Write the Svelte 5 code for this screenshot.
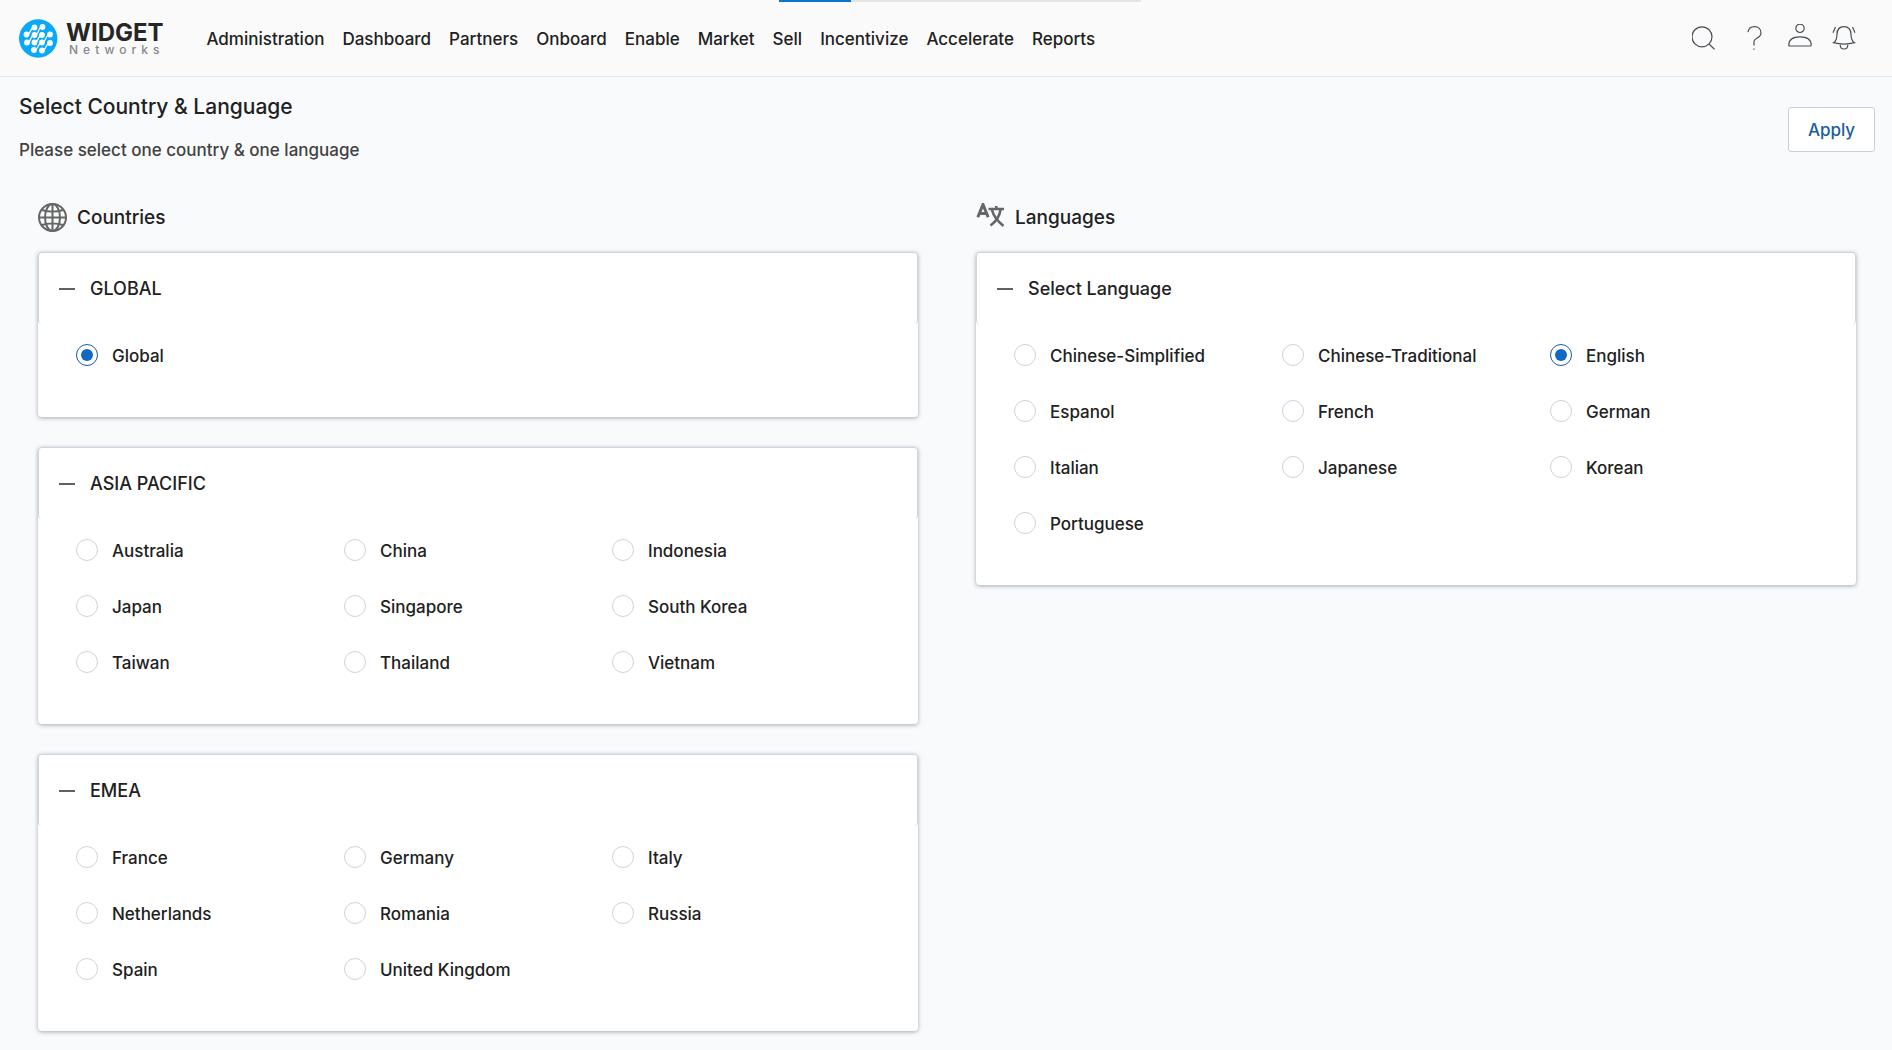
<script lang="ts">
  interface Section {
    title: string;
    options: string[];
  }

  const NAV = [
    "Administration", "Dashboard", "Partners", "Onboard", "Enable",
    "Market", "Sell", "Incentivize", "Accelerate", "Reports"
  ];

  const REGIONS: Section[] = [
    { title: "GLOBAL", options: ["Global"] },
    {
      title: "ASIA PACIFIC",
      options: [
        "Australia", "China", "Indonesia",
        "Japan", "Singapore", "South Korea",
        "Taiwan", "Thailand", "Vietnam"
      ]
    },
    {
      title: "EMEA",
      options: [
        "France", "Germany", "Italy",
        "Netherlands", "Romania", "Russia",
        "Spain", "United Kingdom"
      ]
    }
  ];

  const LANGUAGES: Section[] = [
    {
      title: "Select Language",
      options: [
        "Chinese-Simplified", "Chinese-Traditional", "English",
        "Espanol", "French", "German",
        "Italian", "Japanese", "Korean",
        "Portuguese"
      ]
    }
  ];

  let country = $state("Global");
  let language = $state("English");
  let collapsed: Record<string, boolean> = $state({});
  let progress = $state(20);

  function toggle(title: string) {
    collapsed[title] = !collapsed[title];
  }
</script>

{#snippet card(section: Section, name: string, selected: string, pick: (v: string) => void)}
  <section class="card">
    <button
      class="card-head"
      aria-expanded={!collapsed[section.title]}
      onclick={() => toggle(section.title)}
    >
      <span class="minus"></span>
      {section.title}
    </button>
    {#if !collapsed[section.title]}
      <div class="options">
        {#each section.options as option}
          <label class="option">
            <input
              type="radio"
              {name}
              value={option}
              checked={selected === option}
              onchange={() => pick(option)}
            />
            <span>{option}</span>
          </label>
        {/each}
      </div>
    {/if}
  </section>
{/snippet}

<div class="progress"><div class="progress-bar" style="width: {progress}%"></div></div>

<header class="topbar">
  <a class="logo" href="#home">
    <svg width="39" height="39" viewBox="0 0 39 39">
      <circle cx="19.2" cy="19.5" r="19.2" fill="#0aa8f8" />
      <g stroke="#fff" stroke-width="1.2" fill="none" stroke-linecap="round">
        <path d="M7.500 15.500C13 15 10 9 15.500 8.500" />
        <path d="M8 23.500C13.500 23 10 16.500 15.500 16S18 8.500 23.500 8" />
        <path d="M15.500 23.500C20.500 23 18 16.500 23 16" />
        <path d="M15 31C20.500 30.500 18 24 23 23.500S25.500 16 31 15.500" />
        <path d="M23 31.500C28.500 31 25.500 24.500 31 24" />
      </g>
      <g fill="#fff">
        <circle cx="15.500" cy="8.500" r="2.900" />
        <circle cx="23.500" cy="8" r="2.900" />
        <circle cx="7.500" cy="15.500" r="2.900" />
        <circle cx="15.500" cy="16" r="2.900" />
        <circle cx="23" cy="16" r="2.900" />
        <circle cx="31" cy="15.500" r="2.900" />
        <circle cx="8" cy="23.500" r="2.900" />
        <circle cx="15.500" cy="23.500" r="2.900" />
        <circle cx="23" cy="23.500" r="2.900" />
        <circle cx="31" cy="24" r="2.900" />
        <circle cx="15" cy="31" r="2.900" />
        <circle cx="23" cy="31.500" r="2.900" />
      </g>
    </svg>
    <span class="brand">
      <span class="brand-name">WIDGET</span>
      <span class="brand-sub">Networks</span>
    </span>
  </a>

  <nav class="nav">
    {#each NAV as item}
      <a href="#{item.toLowerCase()}">{item}</a>
    {/each}
  </nav>

  <div class="tools">
    <button class="tool search" aria-label="Search">
      <svg width="24" height="28" viewBox="0 0 24 28">
        <circle cx="10" cy="12.800" r="10" />
        <path d="M17 20l5.500 5.200" />
      </svg>
    </button>
    <button class="tool" aria-label="Help">
      <svg width="24" height="28" viewBox="0 0 24 28">
        <path d="M4 8.200C4.500 4.600 7 2.700 10.500 2.700c4 0 6.500 2.700 6.500 6.300 0 5.500-7 4.500-7 8.500V21.500M10 24.500v1.300" />
      </svg>
    </button>
    <button class="tool" aria-label="Account">
      <svg width="24" height="28" viewBox="0 0 24 28">
        <circle cx="12" cy="4.300" r="4.200" />
        <path d="M.8 21C.8 15.500 5.500 12.800 12 12.800S23.200 15.500 23.200 21c0 .7-.3 1-1 1H1.800c-.7 0-1-.3-1-1z" />
      </svg>
    </button>
    <button class="tool" aria-label="Notifications">
      <svg width="24" height="28" viewBox="0 0 24 28">
        <path d="M12 2.700c-4.500 0-7 3-7 7.500 0 4.500-1 7-3.500 8.500 6 1.600 15 1.600 21 0C20 17.200 19 14.700 19 10.200c0-4.500-2.500-7.500-7-7.500zM8.300 20v1.500c0 2 1.600 3.500 3.700 3.500s3.700-1.500 3.700-3.500V20M3.500 3L1 8.700M20.500 3L23 8.700" />
      </svg>
    </button>
  </div>
</header>

<main class="page">
  <div class="page-head">
    <div>
      <h1>Select Country &amp; Language</h1>
      <p>Please select one country &amp; one language</p>
    </div>
    <button class="apply">Apply</button>
  </div>

  <div class="columns">
    <div class="column">
      <h2>
        <svg width="29" height="29" viewBox="0 0 29 29" fill="none" stroke="#666" stroke-width="2">
          <circle cx="14.500" cy="14.500" r="13.500" />
          <ellipse cx="14.500" cy="14.500" rx="7.500" ry="13.500" />
          <path d="M14.500 1v27M1 14.500h27M4 7c6 2 15 2 21 0M4 22c6-2 15-2 21 0" />
        </svg>
        Countries
      </h2>
      {#each REGIONS as region}
        {@render card(region, "country", country, (v) => (country = v))}
      {/each}
    </div>

    <div class="column">
      <h2>
        <svg width="29" height="29" viewBox="0 0 29 29" fill="none" stroke="#666" stroke-width="3">
          <path d="M1.800 14.300L7 1.500 12.200 14.300M3.500 10.500h7" />
          <path d="M12.500 6h15.500M20.300 3v3M24.500 7c-1 6-5 12-10 15.500M16 7c1.500 6 6 11.500 11.500 16" stroke-width="2.600" />
        </svg>
        Languages
      </h2>
      {#each LANGUAGES as group}
        {@render card(group, "language", language, (v) => (language = v))}
      {/each}
    </div>
  </div>
</main>

<style>
  :global(body) {
    margin: 0;
    background: #f9fafc;
    color: #212121;
    font-family: Inter, "Liberation Sans", sans-serif;
    font-size: 17px;
    font-weight: 450;
  }

  button {
    font-family: inherit;
    cursor: pointer;
  }

  .progress {
    position: absolute;
    top: 0;
    left: 50%;
    width: 362px;
    height: 2px;
    margin-left: -167px;
    background: #e4e4e4;
  }

  .progress-bar {
    height: 100%;
    background: #0b74d1;
  }

  .topbar {
    display: flex;
    align-items: center;
    height: 76px;
    padding: 0 36px 0 19px;
    background: #fafafa;
    border-bottom: 1px solid #dfe7ef;
  }

  .logo {
    display: flex;
    align-items: center;
    gap: 8px;
    color: #262626;
    text-decoration: none;
  }

  .brand {
    display: flex;
    flex-direction: column;
  }

  .brand-name {
    font-size: 24px;
    font-weight: 700;
    line-height: 24px;
  }

  .brand-sub {
    padding-left: 3px;
    color: #888;
    font-size: 12px;
    line-height: 10px;
    letter-spacing: 5px;
  }

  .nav {
    display: flex;
    gap: 18px;
    margin-left: 42px;
    padding-top: 1px;
  }

  .nav a {
    color: #212121;
    text-decoration: none;
  }

  .tools {
    display: flex;
    gap: 20px;
    margin-left: auto;
  }

  .tool {
    display: flex;
    padding: 0;
    border: 0;
    background: none;
  }

  .search {
    margin-right: 8px;
  }

  .tool svg {
    fill: none;
    stroke: #4a5058;
    stroke-width: 1.2;
  }

  .page {
    padding: 16px 17px 16px 19px;
  }

  .page-head {
    display: flex;
    justify-content: space-between;
    align-items: flex-start;
  }

  h1 {
    margin: 0;
    font-size: 21px;
    font-weight: 500;
    line-height: 28px;
  }

  p {
    margin: 16px 0 0;
    color: #424242;
    line-height: 26px;
  }

  .apply {
    width: 87px;
    height: 45px;
    margin-top: 14px;
    border: 1px solid #c8d0da;
    border-radius: 3px;
    background: #fff;
    color: #1a5c9e;
    font-size: 17px;
    font-weight: 500;
  }

  .columns {
    display: grid;
    grid-template-columns: 1fr 1fr;
    align-items: start;
    gap: 58px;
    padding: 40px 19px 0;
  }

  .column {
    display: flex;
    flex-direction: column;
    gap: 30px;
  }

  h2 {
    display: flex;
    align-items: center;
    gap: 10px;
    margin: 0 0 -10px;
    font-size: 19px;
    font-weight: 500;
    line-height: 29px;
  }

  .card {
    background: #fff;
    border-radius: 4px;
    box-shadow: 0 1px 4px #7d8794b3;
  }

  .card-head {
    display: flex;
    align-items: center;
    gap: 15px;
    width: 100%;
    height: 72px;
    padding: 0 20px;
    border: 1px solid #cdd5de;
    border-bottom: 0;
    border-radius: 4px;
    background: #fff;
    color: #212121;
    font-size: 18px;
    font-weight: 500;
  }

  .minus {
    width: 16px;
    height: 2px;
    background: #616161;
  }

  .options {
    display: grid;
    grid-template-columns: repeat(3, 1fr);
    padding: 3px 38px 34px;
  }

  .option {
    display: flex;
    align-items: center;
    gap: 14px;
    height: 56px;
    cursor: pointer;
  }

  .option span {
    padding-top: 2px;
  }

  input[type="radio"] {
    display: grid;
    place-items: center;
    appearance: none;
    width: 22px;
    height: 22px;
    margin: 0;
    border: 1px solid #ccd4de;
    border-radius: 50%;
    background: #fff;
  }

  input[type="radio"]:checked {
    border-color: #1a5c9e;
  }

  input[type="radio"]:checked::before {
    content: "";
    width: 12px;
    height: 12px;
    border-radius: 50%;
    background: #1068bf;
  }
</style>
